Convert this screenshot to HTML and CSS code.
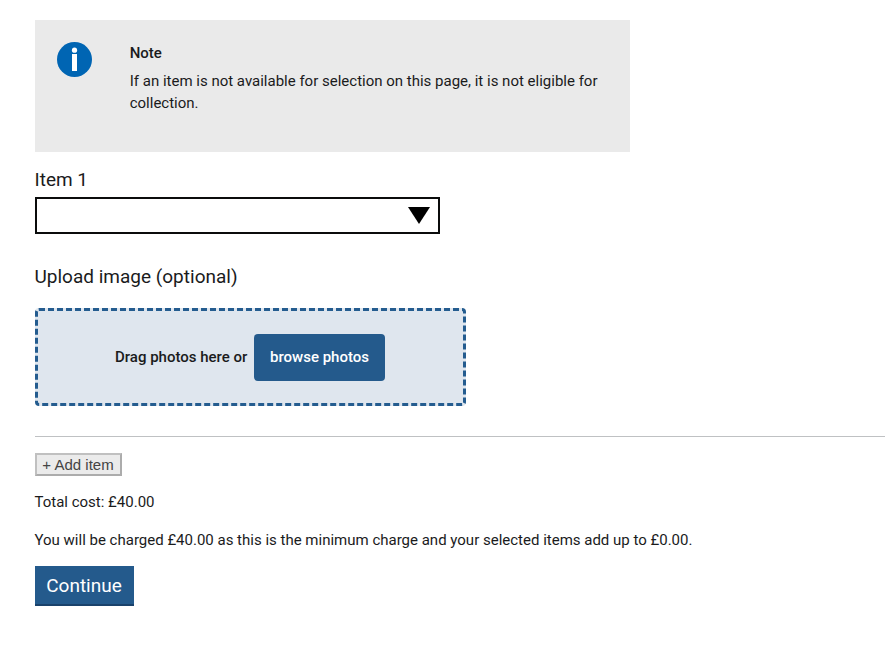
FILE: index.html
```html
<!DOCTYPE html>
<html lang="en">
<head>
<meta charset="utf-8">
<title>Select items</title>
<link rel="stylesheet" href="styles.css">
</head>
<body>
<main class="page">
  <section class="note">
    <svg class="note-icon" viewBox="0 0 35 35" aria-hidden="true">
      <circle cx="17.5" cy="17.5" r="17.5" fill="#0065b3"/>
      <circle cx="17.5" cy="8.2" r="2.6" fill="#fff"/>
      <path d="M15 12h5v17h-5z" fill="#fff"/>
    </svg>
    <div class="note-body">
      <h2 class="note-title">Note</h2>
      <p class="note-text">If an item is not available for selection on this page, it is not eligible for collection.</p>
    </div>
  </section>
  <div class="label item-label">Item 1</div>
  <div class="select" role="combobox">
    <svg class="arrow" viewBox="0 0 22 17" aria-hidden="true"><path d="M0 0h22L11 17z"/></svg>
  </div>
  <div class="label upload-label">Upload image (optional)</div>
  <div class="dropzone">
    <span class="drop-text">Drag photos here or</span>
    <button class="browse">browse photos</button>
  </div>
  <hr class="rule">
  <button class="add">+ Add item</button>
  <p class="total">Total cost: £40.00</p>
  <p class="charge">You will be charged £40.00 as this is the minimum charge and your selected items add up to £0.00.</p>
  <button class="continue">Continue</button>
</main>
</body>
</html>
```
FILE: styles.css
```css
* { box-sizing: border-box; }
body {
  margin: 0;
  background: #fff;
  color: #1a1b1c;
  font: 15px/22px Roboto, sans-serif;
}
button { font-family: inherit; margin: 0; }
.page { display: flex; flex-direction: column; align-items: flex-start; padding: 20px 0 0 35px; }
.note { display: flex; width: 595px; height: 132px; padding: 22px 20px 0 22px; background: #eaeaea; }
.note-icon { width: 35px; height: 35px; flex: none; margin-right: 38px; }
.note-body { margin-left: -0.3px; }
.note-title { margin: 0 0 6px; font-size: 15px; line-height: 22px; font-weight: 500; }
.note-text { margin: 0; }
.label { margin-left: -0.5px; font-size: 19px; line-height: 24px; }
.item-label { margin-top: 16px; }
.select { display: flex; justify-content: flex-end; width: 405px; height: 37px; margin-top: 5px; padding: 8px 8px 0 0; border: 2px solid #0b0c0c; }
.arrow { width: 22px; height: 17px; }
.upload-label { margin-top: 31px; }
.dropzone { display: flex; align-items: center; padding-left: 77px; gap: 6px; width: 431px; height: 98px; margin-top: 19px; border: 3px dashed #245c8f; border-radius: 4px; background: #dfe6ee; }
.drop-text { width: 133px; white-space: nowrap; font-weight: 500; }
.browse { width: 131px; height: 47px; padding: 0; border: 0; border-radius: 4px; background: #245a8c; color: #fff; font-size: 15px; font-weight: 500; }
.rule { width: 100%; height: 1px; margin: 30px 0 0; border: 0; background: #bfc1c3; }
.add { width: 87px; height: 23px; margin-top: 16px; padding: 0 1px 0 0; border: 2px solid; border-color: #c0c0c0 #acacac #acacac #c0c0c0; background: #ebebeb; color: #444; font-family: "Liberation Sans", sans-serif; font-size: 15px; line-height: 19px; }
.total { margin: 15px 0 0 -0.5px; }
.charge { margin: 16px 0 0 -0.5px; }
.continue { width: 99px; height: 40px; margin-top: 15px; padding: 0 1px 2px 0; border: 0; background: #245a8c; box-shadow: inset 0 -2px #1a426b; color: #fff; font-size: 19px; }
```
